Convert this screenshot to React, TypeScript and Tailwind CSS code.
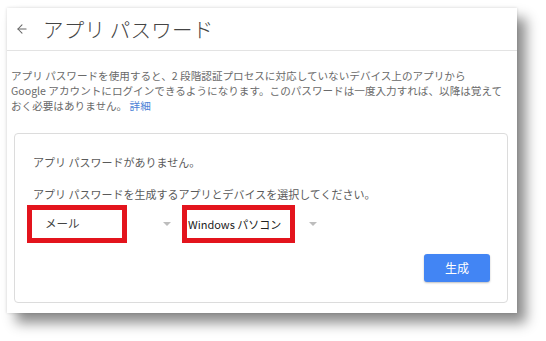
import { ArrowLeft } from 'lucide-react';

// アプリ パスワード画面 — 赤枠は選択中のアプリ／デバイスを示す注記。
const FONT = { fontFamily: '"Noto Sans CJK JP", "Noto Sans", sans-serif' };

function Caret() {
  return <span className="w-0 h-0 border-x-[4px] border-x-transparent border-t-[4px] border-t-[#bdbdbd]" />;
}

export default function App() {
  return (
    <div className="w-[546px] h-[341px] bg-white overflow-hidden pt-[8px] pl-[7px]" style={FONT}>
      <div className="w-[510px] h-[305px] bg-white flex flex-col shadow-[9px_10px_12px_rgba(0,0,0,0.45),0_0_3px_rgba(0,0,0,0.15)]">
        <div className="h-[43px] flex items-center pl-[8px] border-b border-[#e3e3e3] flex-shrink-0">
          <ArrowLeft size={14} strokeWidth={1.8} className="text-[#666]" />
          <span className="ml-[14px] text-[20.5px] font-light text-[#444] tracking-[0.2px]">アプリ パスワード</span>
        </div>

        <p className="pt-[17px] pl-[4px] text-[10.6px] leading-[15px] text-[#6a6a6a] whitespace-nowrap">
          アプリ パスワードを使用すると、2 段階認証プロセスに対応していないデバイス上のアプリから
          <br />
          Google アカウントにログインできるようになります。このパスワードは一度入力すれば、以降は覚えて
          <br />
          おく必要はありません。 <span className="text-[#4a7fd6]">詳細</span>
        </p>

        <div className="mt-[20px] ml-[7px] w-[494px] h-[170px] border border-[#dcdcdc] rounded-[4px] flex flex-col">
          <p className="pt-[21px] pl-[18px] text-[11px] leading-[15px] text-[#5a5a5a]">アプリ パスワードがありません。</p>
          <p className="mt-[17px] pl-[18px] text-[11px] leading-[15px] text-[#5a5a5a]">
            アプリ パスワードを生成するアプリとデバイスを選択してください。
          </p>

          <div className="mt-[3px] ml-[12px] flex items-center h-[38px]">
            <div className="w-[100px] h-[38px] border-[5px] border-[#e3141d] flex items-center pl-[13px] text-[11.5px] text-[#444]">
              メール
            </div>
            <span className="ml-[36px] flex"><Caret /></span>
            <div className="ml-[11px] w-[113px] h-[38px] border-[5px] border-[#e3141d] flex items-center pl-[1px] text-[11px] text-[#222]">
              Windows パソコン
            </div>
            <span className="ml-[14px] flex"><Caret /></span>
          </div>

          <div className="mt-[11px] flex justify-end pr-[17px]">
            <button className="w-[66px] h-[28px] rounded-[3px] bg-[#4285f4] text-white text-[12px] shadow-[0_1px_2px_rgba(0,0,0,0.25)]">
              生成
            </button>
          </div>
        </div>
      </div>
    </div>
  );
}
